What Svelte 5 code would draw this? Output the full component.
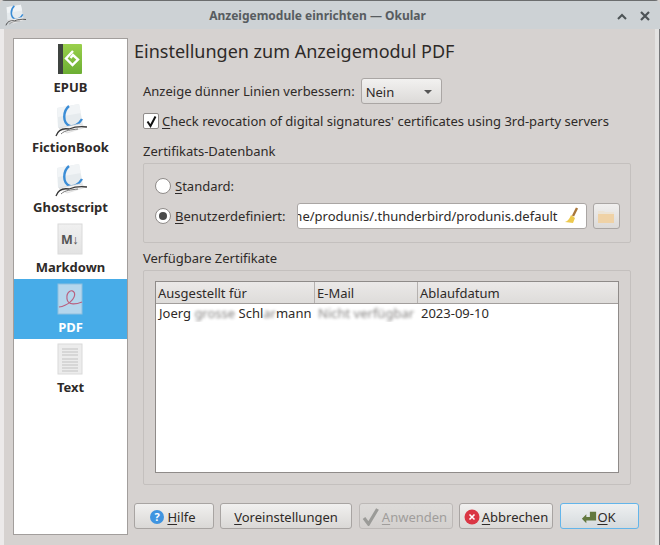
<script>
  const items = [
    { label: 'EPUB', icon: 'epub' },
    { label: 'FictionBook', icon: 'okular' },
    { label: 'Ghostscript', icon: 'okular' },
    { label: 'Markdown', icon: 'md' },
    { label: 'PDF', icon: 'pdf', active: true },
    { label: 'Text', icon: 'text' }
  ];
  const textLines = [6, 9, 12, 16, 19, 22, 25, 28];
</script>

{#snippet okular()}
  <path d="M2 5 L24 1 L28 22 L3 25 Z" fill="#e6ebee"/>
  <path d="M2 5 L24 1 L26 10 L3 14 Z" fill="#f1f4f6"/>
  <path d="M14 3 C8 8 7 20 15 23 C19 24 24 21 27 16" fill="none" stroke="#3b8dd6" stroke-width="2.4"/>
  <path d="M4 25 L24 21 L31 24 L12 30 Z" fill="#f4f4f4" stroke="#d2d2d2" stroke-width=".6"/>
  <path d="M1 33 C3 27 8 25 14 26 C19 24 25 23 32 24" fill="none" stroke="#3a3a3a" stroke-width="1.3"/>
  <path d="M6 31 C10 27 16 27 23 26" fill="none" stroke="#777" stroke-width="1"/>
{/snippet}

<div class="window">
  <header class="titlebar">
    <svg class="appicon" width="22" height="22" viewBox="0 0 33 34">{@render okular()}</svg>
    <span class="title">Anzeigemodule einrichten — Okular</span>
    <svg class="winbtn up" width="10" height="8" viewBox="0 0 10 8"><path d="M1 6 L5 2 L9 6" fill="none" stroke="#4d5356" stroke-width="2"/></svg>
    <svg class="winbtn close" width="10" height="10" viewBox="0 0 10 10"><path d="M1 1 L9 9 M9 1 L1 9" fill="none" stroke="#4d5356" stroke-width="2.2"/></svg>
  </header>

  <div class="body">
    <nav class="sidebar">
      {#each items as item}
        <div class="navitem" class:active={item.active}>
          {#if item.icon === 'okular'}
            <svg class="navicon wide" width="33" height="34" viewBox="0 0 33 34">{@render okular()}</svg>
          {:else}
            <svg class="navicon" width="26" height="32" viewBox="0 0 26 32">
              {#if item.icon === 'epub'}
                <defs><linearGradient id="g" x1="0" y1="0" x2="0" y2="1"><stop offset="0" stop-color="#9ad04c"/><stop offset="1" stop-color="#6cae33"/></linearGradient></defs>
                <rect x="1" y="1" width="24" height="30" rx="1" fill="url(#g)"/>
                <rect x="1" y="1" width="5" height="30" fill="#3f4440"/>
                <path d="M16 8 L9 15.5 L15.500 22 L21 16.500 L16 12 L13.500 15" fill="none" stroke="#fff" stroke-width="2.4"/>
              {:else if item.icon === 'md'}
                <defs><linearGradient id="m" x1="0" y1="0" x2="0" y2="1"><stop offset="0" stop-color="#f0f0f0"/><stop offset="1" stop-color="#e2e2e2"/></linearGradient></defs>
                <rect x="1" y="1" width="24" height="30" fill="url(#m)" stroke="#dadada"/>
              {:else if item.icon === 'pdf'}
                <rect x="1" y="1" width="24" height="30" fill="#b5d6ec" stroke="#8ebfdf"/>
                <path d="M2 24 C10 23 19 16 17.500 10 C15 5 9 9 10 16 C11 23 20 21 25 19" fill="none" stroke="#b9607f" stroke-width="1.2"/>
              {:else}
                <rect x="1" y="1" width="24" height="30" fill="#ececec" stroke="#dadada"/>
                {#each textLines as y}
                  <line x1="5" x2="21" y1={y} y2={y} stroke="#c2c2c2"/>
                {/each}
              {/if}
            </svg>
          {/if}
          {#if item.icon === 'md'}<span class="mdmark">M↓</span>{/if}
          <span class="navlabel">{item.label}</span>
        </div>
      {/each}
    </nav>

    <main class="content">
      <h1>Einstellungen zum Anzeigemodul PDF</h1>
      <div class="form">
        <div class="row thin">
          <span>Anzeige dünner Linien verbessern:</span>
          <div class="combo"><span>Nein</span><i class="arrow"></i></div>
        </div>
        <label class="check">
          <span class="box">
            <svg width="13" height="13" viewBox="0 0 13 13"><path d="M2.500 6.500 L5.500 11 L10.500 1.500" fill="none" stroke="#111" stroke-width="2"/></svg>
          </span>
          <span><u>C</u>heck revocation of digital signatures' certificates using 3rd-party servers</span>
        </label>

        <div class="grouptitle first">Zertifikats-Datenbank</div>
        <section class="group db">
          <div class="radiorow"><span class="radio"></span><span><u>S</u>tandard:</span></div>
          <div class="radiorow second">
            <span class="radio on"></span><span><u>B</u>enutzerdefiniert:</span>
            <div class="path"><span class="pathtext">ne/produnis/.thunderbird/produnis.default</span>
              <svg class="broom" width="16" height="17" viewBox="0 0 16 17">
                <path d="M13 1 L9 9" stroke="#a8763a" stroke-width="2.400"/>
                <path d="M7 8 L11 11 L9 16 L1 15 C4 14 6 11 7 8Z" fill="#edc94e"/>
              </svg>
            </div>
            <button class="folderbtn" aria-label="Ordner">
              <svg width="16" height="14" viewBox="0 0 16 14">
                <path d="M0 2 H6 L7 3 H16 V14 H0 Z" fill="#ece4d6"/>
                <rect x="0" y="5" width="16" height="9" fill="#efd2a6"/>
              </svg>
            </button>
          </div>
        </section>

        <div class="grouptitle">Verfügbare Zertifikate</div>
        <section class="group certs">
          <div class="table">
            <div class="thead">
              <div class="th c1">Ausgestellt für</div>
              <div class="th c2">E-Mail</div>
              <div class="th c3">Ablaufdatum</div>
            </div>
            <div class="tr">
              <div class="td c1">Joerg <span class="blur">grosse</span> Schl<span class="blur s">ar</span>mann</div>
              <div class="td c2"><span class="blur">Nicht verfügbar</span></div>
              <div class="td c3">2023-09-10</div>
            </div>
          </div>
        </section>
      </div>

      <footer class="buttons">
        <button class="btn hilfe">
          <svg width="16" height="16" viewBox="0 0 16 16"><circle cx="8" cy="8" r="7" fill="#3f94e0"/><text x="8" y="12" text-anchor="middle" class="q">?</text></svg>
          <span><u>H</u>ilfe</span>
        </button>
        <button class="btn vor"><span><u>V</u>oreinstellungen</span></button>
        <button class="btn anw disabled">
          <svg width="18" height="18" viewBox="0 0 18 18"><path d="M2 10 L6.500 16 L15.500 1" fill="none" stroke="#9b9b98" stroke-width="3.2"/></svg>
          <span><u>A</u>nwenden</span>
        </button>
        <button class="btn abb">
          <svg width="16" height="16" viewBox="0 0 16 16"><circle cx="8" cy="8" r="7.500" fill="#da3644"/><path d="M5.500 5.500 L10.500 10.500 M10.500 5.500 L5.500 10.500" stroke="#fff" stroke-width="1.600"/></svg>
          <span><u>A</u>bbrechen</span>
        </button>
        <button class="btn ok">
          <svg width="16" height="16" viewBox="0 0 18 16"><path d="M1 10 L6 5 V8 H10 V2 H17 V12 H6 V15 Z" fill="#63783f"/></svg>
          <span><u>O</u>K</span>
        </button>
      </footer>
    </main>
  </div>
</div>

<style>
  :global(body) { margin: 0; background: #d6d2d0; }
  .window {
    width: 660px; height: 545px; box-sizing: border-box; overflow: hidden;
    font-family: "Noto Sans", sans-serif; font-size: 13px; color: #2e2a28;
    background: #d6d2d0; display: flex; flex-direction: column;
    border-radius: 5px 5px 0 0;
  }
  u { text-underline-offset: 2px; text-decoration-thickness: 1px; }
  .titlebar {
    height: 29px; flex: none; background: #cdd2d5; border-top: 1px solid #6b6d6e;
    box-sizing: border-box; display: flex; align-items: center; position: relative;
    padding-left: 5px;
  }
  .appicon { flex: none; }
  .title { flex: 1; text-align: center; font-weight: 700; font-size: 12px; color: #575c60; margin-right: 52px; }
  .winbtn { position: absolute; }
  .up { left: 617px; top: 12px; }
  .close { left: 640px; top: 10px; }
  .body { flex: 1; display: flex; padding: 9px 0 10px 13px; gap: 6px; min-height: 0; position: relative; }
  .body::before { content: ""; position: absolute; left: 0; top: 0; bottom: 0; width: 4px; background: #eceaea; }
  .body::after { content: ""; position: absolute; right: 0; top: 0; bottom: 0; width: 5px; background: #e4e3e2; border-right: 1px solid #77787a; box-sizing: border-box; }
  .sidebar {
    width: 115px; flex: none; box-sizing: border-box; background: #fff;
    border: 1px solid #a29e9c; display: flex; flex-direction: column;
    position: relative; z-index: 1;
  }
  .navitem { height: 60px; display: flex; flex-direction: column; align-items: center; position: relative; padding-top: 4px; box-sizing: border-box; }
  .navitem.active { background: #47ace8; color: #fff; }
  .navicon { flex: none; margin-right: 2px; }
  .navicon.wide { margin: 0 0 0 1px; }
  .navlabel { font-weight: 700; line-height: 18px; margin-top: 3px; }
  .navicon.wide + .navlabel { margin-top: 1px; }
  .mdmark { position: absolute; top: 12px; left: 47px; font-size: 12.5px; font-weight: 700; color: #555; letter-spacing: -.5px; }
  .content { flex: none; display: flex; flex-direction: column; min-width: 0; width: 505px; padding-bottom: 6px; box-sizing: border-box; }
  h1 { font-size: 18px; font-weight: 400; margin: 0; line-height: 26px; color: #2e2a28; }
  .form { flex: 1; padding: 14px 0 0 9px; width: 497px; box-sizing: border-box; display: flex; flex-direction: column; min-height: 0; }
  .row { display: flex; align-items: center; gap: 6px; }
  .combo {
    width: 81px; height: 26px; box-sizing: border-box; border: 1px solid #aaa6a4; border-radius: 3px;
    background: linear-gradient(#f2f1f0, #dcdad8); display: flex; align-items: center; justify-content: space-between;
    padding: 1px 6px 0 4px;
  }
  .arrow { width: 0; height: 0; border: 4px solid transparent; border-top: 4px solid #555; border-bottom: 0; margin-right: 3px; }
  .check { display: flex; align-items: center; gap: 3px; margin-top: 7px; height: 20px; }
  .box { width: 14px; height: 14px; background: #fff; border: 1px solid #8f8b89; display: flex; align-items: center; justify-content: center; border-radius: 2px; }
  .grouptitle { line-height: 18px; margin-top: 6px; }
  .grouptitle.first { margin-top: 11px; }
  .group { border: 1px solid #c4c0be; border-radius: 2px; box-sizing: border-box; margin-top: 3px; }
  .db { height: 80px; padding: 8px 10px 0 11px; }
  .radiorow { display: flex; align-items: center; gap: 4px; height: 27px; }
  .radiorow.second { margin-top: 3px; }
  .radio { width: 14px; height: 14px; border-radius: 50%; background: #fff; border: 1px solid #8f8b89; display: block; position: relative; flex: none; }
  .radio.on::after { content: ""; position: absolute; inset: 3px; border-radius: 50%; background: #4a4a4a; }
  .path {
    width: 290px; height: 26px; box-sizing: border-box; margin-left: 7px; background: #fff; border: 1px solid #aaa6a4;
    border-radius: 3px; display: flex; align-items: center; justify-content: flex-end; overflow: hidden; position: relative;
    padding: 1px 28px 0 0; flex: none;
  }
  .pathtext { white-space: nowrap; flex: none; }
  .broom { position: absolute; right: 6px; top: 3px; }
  .folderbtn {
    width: 27px; height: 26px; padding: 0; margin-left: 2px; border: 1px solid #aaa6a4; border-radius: 3px;
    background: linear-gradient(#f0efee, #dcdad8); display: flex; align-items: center; justify-content: center; flex: none;
  }
  .certs { height: 215px; padding: 10px 11px 12px 11px; }
  .table { height: 192px; box-sizing: border-box; background: #fff; border: 1px solid #8f8b89; }
  .thead { display: flex; height: 21px; background: linear-gradient(#ebe9e8, #dedcda); border-bottom: 1px solid #a29e9c; }
  .th { box-sizing: border-box; padding-left: 2px; line-height: 22px; border-right: 1px solid #b5b1af; }
  .th.c3 { border: 0; flex: 1; }
  .tr { display: flex; }
  .td { box-sizing: border-box; padding-left: 3px; line-height: 18px; white-space: nowrap; overflow: hidden; }
  .c1 { width: 159px; }
  .c2 { width: 103px; }
  .c3 { flex: 1; }
  .blur { filter: blur(1.4px); opacity: .6; }
  .buttons { display: flex; gap: 7px; height: 26px; flex: none; }
  .btn {
    height: 26px; box-sizing: border-box; border: 1px solid #a8a4a2; border-radius: 3px; padding: 1px 0 0;
    background: linear-gradient(#f1f0ef, #dad8d6); font: inherit; color: inherit; display: flex;
    align-items: center; justify-content: center; gap: 2px;
  }
  .btn svg { flex: none; }
  .q { font: 700 11px "Noto Sans", sans-serif; fill: #fff; }
  .hilfe { width: 80px; padding-right: 3px; }
  .vor { width: 132px; margin-left: -1px; }
  .anw { width: 94px; padding-right: 3px; }
  .abb { width: 94px; margin-left: -1px; }
  .ok { width: 79px; border-color: #63b5ea; background: linear-gradient(#eef0f1, #d5dadd); gap: 0; padding-right: 2px; }
  .disabled { color: #a09d9b; background: linear-gradient(#dddbd9, #d3d0ce); border-color: #bdb9b7; }
</style>
